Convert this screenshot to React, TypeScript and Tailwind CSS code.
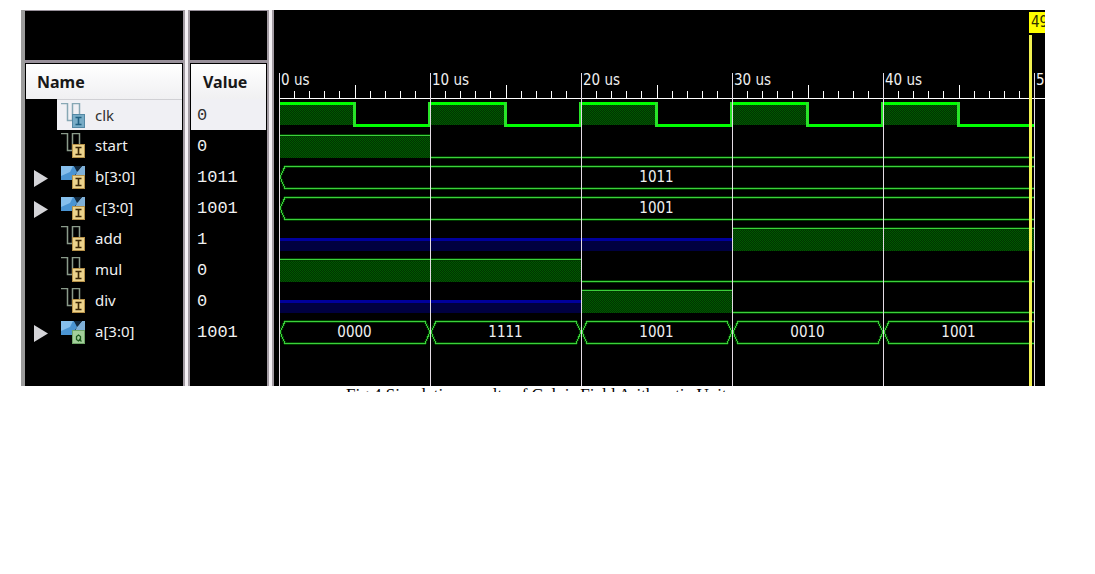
import { useState } from 'react'

type Segment = {
  from: number
  to: number
  level: 'high' | 'low' | 'z' | 'bus'
  label?: string
}

type Signal = {
  name: string
  value: string
  kind: 'input' | 'output'
  bus?: boolean
  wave: Segment[]
}

const END = 50

const signals: Signal[] = [
  {
    name: 'clk',
    value: '0',
    kind: 'input',
    wave: [0, 10, 20, 30, 40].flatMap((t): Segment[] => [
      { from: t, to: t + 5, level: 'high' },
      { from: t + 5, to: t + 10, level: 'low' },
    ]),
  },
  {
    name: 'start',
    value: '0',
    kind: 'input',
    wave: [
      { from: 0, to: 10, level: 'high' },
      { from: 10, to: END, level: 'low' },
    ],
  },
  { name: 'b[3:0]', value: '1011', kind: 'input', bus: true, wave: [{ from: 0, to: END, level: 'bus', label: '1011' }] },
  { name: 'c[3:0]', value: '1001', kind: 'input', bus: true, wave: [{ from: 0, to: END, level: 'bus', label: '1001' }] },
  {
    name: 'add',
    value: '1',
    kind: 'input',
    wave: [
      { from: 0, to: 30, level: 'z' },
      { from: 30, to: END, level: 'high' },
    ],
  },
  {
    name: 'mul',
    value: '0',
    kind: 'input',
    wave: [
      { from: 0, to: 20, level: 'high' },
      { from: 20, to: END, level: 'low' },
    ],
  },
  {
    name: 'div',
    value: '0',
    kind: 'input',
    wave: [
      { from: 0, to: 20, level: 'z' },
      { from: 20, to: 30, level: 'high' },
      { from: 30, to: END, level: 'low' },
    ],
  },
  {
    name: 'a[3:0]',
    value: '1001',
    kind: 'output',
    bus: true,
    wave: ['0000', '1111', '1001', '0010', '1001'].map((label, i): Segment => ({
      from: i * 10,
      to: i * 10 + 10,
      level: 'bus',
      label,
    })),
  },
]

// waveform geometry
const ROW = 31
const TOP = 89
const HEIGHT = 376
const xAt = (t: number) => 5 + Math.round(t * 15.1)

function SignalIcon({ kind, bus, selected }: { kind: 'input' | 'output'; bus?: boolean; selected?: boolean }) {
  const badge = kind === 'output' ? '#a3cf9a' : selected ? '#78acc6' : '#ecd38c'
  const edge = kind === 'output' ? '#6fa568' : selected ? '#5488a4' : '#b8934a'
  const ink = kind === 'output' ? '#1d5a1d' : selected ? '#1f5f80' : '#3a2605'
  return (
    <svg width="24" height="25" viewBox="0 0 24 25" className="shrink-0" aria-hidden="true">
      {bus ? (
        <>
          <path d="M0 2H13L17 7L14 11V16H0z" fill="#4a94d2" />
          <path d="M0 2H12L9 8L0 12z" fill="#86bfec" />
          <path d="M24 2V12H14L16 8L21 2z" fill="#7fb0d8" />
          <path d="M13 2h8l-5 6z" fill="#12283c" />
        </>
      ) : (
        <path
          d="M0 0.5H6.5V17.5H11.5V0.5H18.5V11"
          fill="none"
          stroke={selected ? '#87a7b4' : '#8a9a8a'}
          strokeWidth="1.5"
        />
      )}
      <rect x="11.5" y="11.5" width="12" height="13" fill={badge} stroke={edge} />
      {kind === 'output' ? (
        <path d="M15.5 20.5v-3l2-1.5 2 1.5v3l-2 1.5zM18 20l2.5 2.5" fill="none" stroke={ink} strokeWidth="1.3" />
      ) : (
        <path d="M14.5 14.5h6M14.5 21.5h6M17.5 14.5v7" fill="none" stroke={ink} strokeWidth="1.6" />
      )}
    </svg>
  )
}

function BusSegment({ seg, y }: { seg: Segment; y: number }) {
  const x1 = xAt(seg.from)
  const x2 = xAt(seg.to)
  const hi = y + 5.5
  const lo = y + 27.5
  const mid = y + 16
  const d =
    seg.to === END
      ? `M${x2} ${hi}H${x1 + 6}L${x1 + 1} ${mid}L${x1 + 6} ${lo}H${x2}`
      : `M${x1 + 6} ${hi}H${x2 - 5}L${x2} ${mid}L${x2 - 5} ${lo}H${x1 + 6}L${x1 + 1} ${mid}Z`
  return (
    <g>
      <path d={d} fill="none" stroke="#003c00" strokeWidth="3" />
      <path d={d} fill="none" stroke="#3cd03c" />
      <text x={(x1 + x2) / 2} y={y + 21} textAnchor="middle" fill="#f0f0f0">
        {seg.label}
      </text>
    </g>
  )
}

function Wave({ signal, index }: { signal: Signal; index: number }) {
  const y = TOP + index * ROW
  const thick = signal.name === 'clk'
  const hi = thick ? y + 3 : y + 5
  const lo = thick ? y + 25 : y + 27
  const h = thick ? 3 : 1
  const stroke = thick ? '#00ff00' : '#3cd03c'

  return (
    <g>
      {signal.wave.map((seg, i) => {
        const x = xAt(seg.from)
        const w = xAt(seg.to) - x
        if (seg.level === 'bus') return <BusSegment key={i} seg={seg} y={y} />
        if (seg.level === 'z') {
          return (
            <g key={i}>
              <rect x={x} y={y + 15} width={w} height="13" fill="#000040" />
              <rect x={x} y={y + 15} width={w} height="3" fill="#00009c" />
            </g>
          )
        }
        const high = seg.level === 'high'
        const line = high ? hi : lo
        return (
          <g key={i}>
            {high && <rect x={x} y={hi} width={w} height={lo - hi + 1} fill="url(#fill)" />}
            {!thick && <rect x={x} y={line - 1} width={w} height="3" fill="#003c00" />}
            <rect x={x} y={line} width={w} height={h} fill={stroke} />
            {thick && i > 0 && <rect x={x - 2} y={hi} width="3" height={lo - hi + h} fill="#28e428" />}
          </g>
        )
      })}
    </g>
  )
}

function WaveView() {
  const ticks = Array.from({ length: END + 1 }, (_, i) => i)
  return (
    <svg
      width="100%"
      height={HEIGHT}
      className="block font-['DejaVu_Sans_Condensed','Noto_Sans',sans-serif] text-[15px]"
      shapeRendering="crispEdges"
      role="img"
      aria-label="Waveforms"
    >
      <defs>
        <pattern id="fill" width="2" height="2" patternUnits="userSpaceOnUse">
          <rect width="2" height="2" fill="#003400" />
          <rect width="1" height="1" fill="#005800" />
          <rect x="1" y="1" width="1" height="1" fill="#005800" />
        </pattern>
      </defs>

      {signals.map((s, i) => (
        <Wave key={s.name} signal={s} index={i} />
      ))}

      {/* time scale */}
      <rect x="5" y="88" width="100%" height="1" fill="#fff" />
      {ticks.map((t) => {
        if (t % 10 === 0) {
          return (
            <g key={t}>
              <rect x={xAt(t)} y="63" width="1" height={HEIGHT - 63} fill="#e4dce4" />
              <text x={xAt(t) + 2} y="75" fill="#f0f0f0">
                {t} us
              </text>
            </g>
          )
        }
        const tall = t % 5 === 0
        return <rect key={t} x={xAt(t)} y={tall ? 75 : 81} width="1" height={tall ? 13 : 7} fill="#fff" />
      })}

      {/* cursor */}
      <rect x="755" y="25" width="3" height={HEIGHT - 25} fill="#f2f250" />
      <rect x="755" y="2" width="60" height="21" fill="#ffff00" />
      <text x="757" y="17" fill="#303000">
        49.7 us
      </text>
    </svg>
  )
}

function Divider() {
  return (
    <td
      rowSpan={signals.length + 3}
      aria-hidden="true"
      className="w-[7px] border-x-2 border-[#a39ca3] bg-[#f4f0f4] p-0"
    />
  )
}

export default function App() {
  const [selected, setSelected] = useState('clk')
  const [open, setOpen] = useState('')

  return (
    <main className="min-h-screen bg-white pt-[10px] pr-[50px] pl-[21px]">
      <div className="flex overflow-hidden bg-black">
        <table className="w-[253px] shrink-0 table-fixed border-separate border-spacing-0 border-l-4 border-[#9c9c9c] font-['Noto_Sans','Open_Sans',sans-serif] text-[15px] text-[#f0f0f0]">
          <colgroup>
            <col className="w-[158px]" />
            <col className="w-[7px]" />
            <col className="w-[77px]" />
            <col className="w-[7px]" />
          </colgroup>
          <tbody>
            <tr className="h-[53px]">
              <td className="border-t border-b-3 border-[#98909a] p-0" />
              <Divider />
              <td className="border-t border-b-3 border-[#98909a] p-0" />
              <Divider />
            </tr>
            <tr className="h-9 text-left text-base text-[#181818]">
              <th scope="col" className="border border-b-0 border-black bg-linear-to-b from-white to-[#f0f0f2] py-0 pl-[11px] font-bold">
                Name
              </th>
              <th scope="col" className="border border-b-0 border-black bg-linear-to-b from-white to-[#f0f0f2] py-0 pl-3 font-bold">
                Value
              </th>
            </tr>
            {signals.map((s) => {
              const on = s.name === selected
              return (
                <tr key={s.name} className="h-[31px] cursor-default" onClick={() => setSelected(s.name)}>
                  <td className="p-0 pr-px">
                    <div className="flex h-[31px]">
                      <div className="flex w-8 shrink-0 items-center pt-1 pl-[9px]">
                        {s.bus && (
                          <button
                            type="button"
                            aria-label={`Expand ${s.name}`}
                            aria-expanded={open === s.name}
                            onClick={() => setOpen(open === s.name ? '' : s.name)}
                          >
                            <svg width="14" height="17" viewBox="0 0 14 17" className="block" aria-hidden="true">
                              <path d="M0 0L14 8.5L0 17Z" fill="#d4d4d8" />
                            </svg>
                          </button>
                        )}
                      </div>
                      <div className={`flex flex-1 items-center gap-[10px] pl-1 ${on ? 'border-t border-[#d0d0d4] bg-[#f0f0f4] text-[#303030]' : ''}`}>
                        <SignalIcon kind={s.kind} bus={s.bus} selected={on} />
                        <span>{s.name}</span>
                      </div>
                    </div>
                  </td>
                  <td className="p-0 px-px font-['Liberation_Mono',monospace] text-[17px]">
                    <div className={`flex h-[31px] items-center pt-0.5 pl-[6px] ${on ? 'bg-[#f0f0f4] text-[#303030]' : ''}`}>
                      {s.value}
                    </div>
                  </td>
                </tr>
              )
            })}
            <tr className="h-[39px]">
              <td className="p-0" />
              <td className="p-0" />
            </tr>
          </tbody>
        </table>
        <div className="min-w-0 flex-1 overflow-hidden">
          <WaveView />
        </div>
      </div>
      <p className="h-[6px] overflow-hidden pl-[325px] font-['Liberation_Serif',serif] text-[17px] leading-[18px] whitespace-nowrap text-black">
        Fig.4 Simulation results of Galois Field Arithmetic Unit
      </p>
    </main>
  )
}
